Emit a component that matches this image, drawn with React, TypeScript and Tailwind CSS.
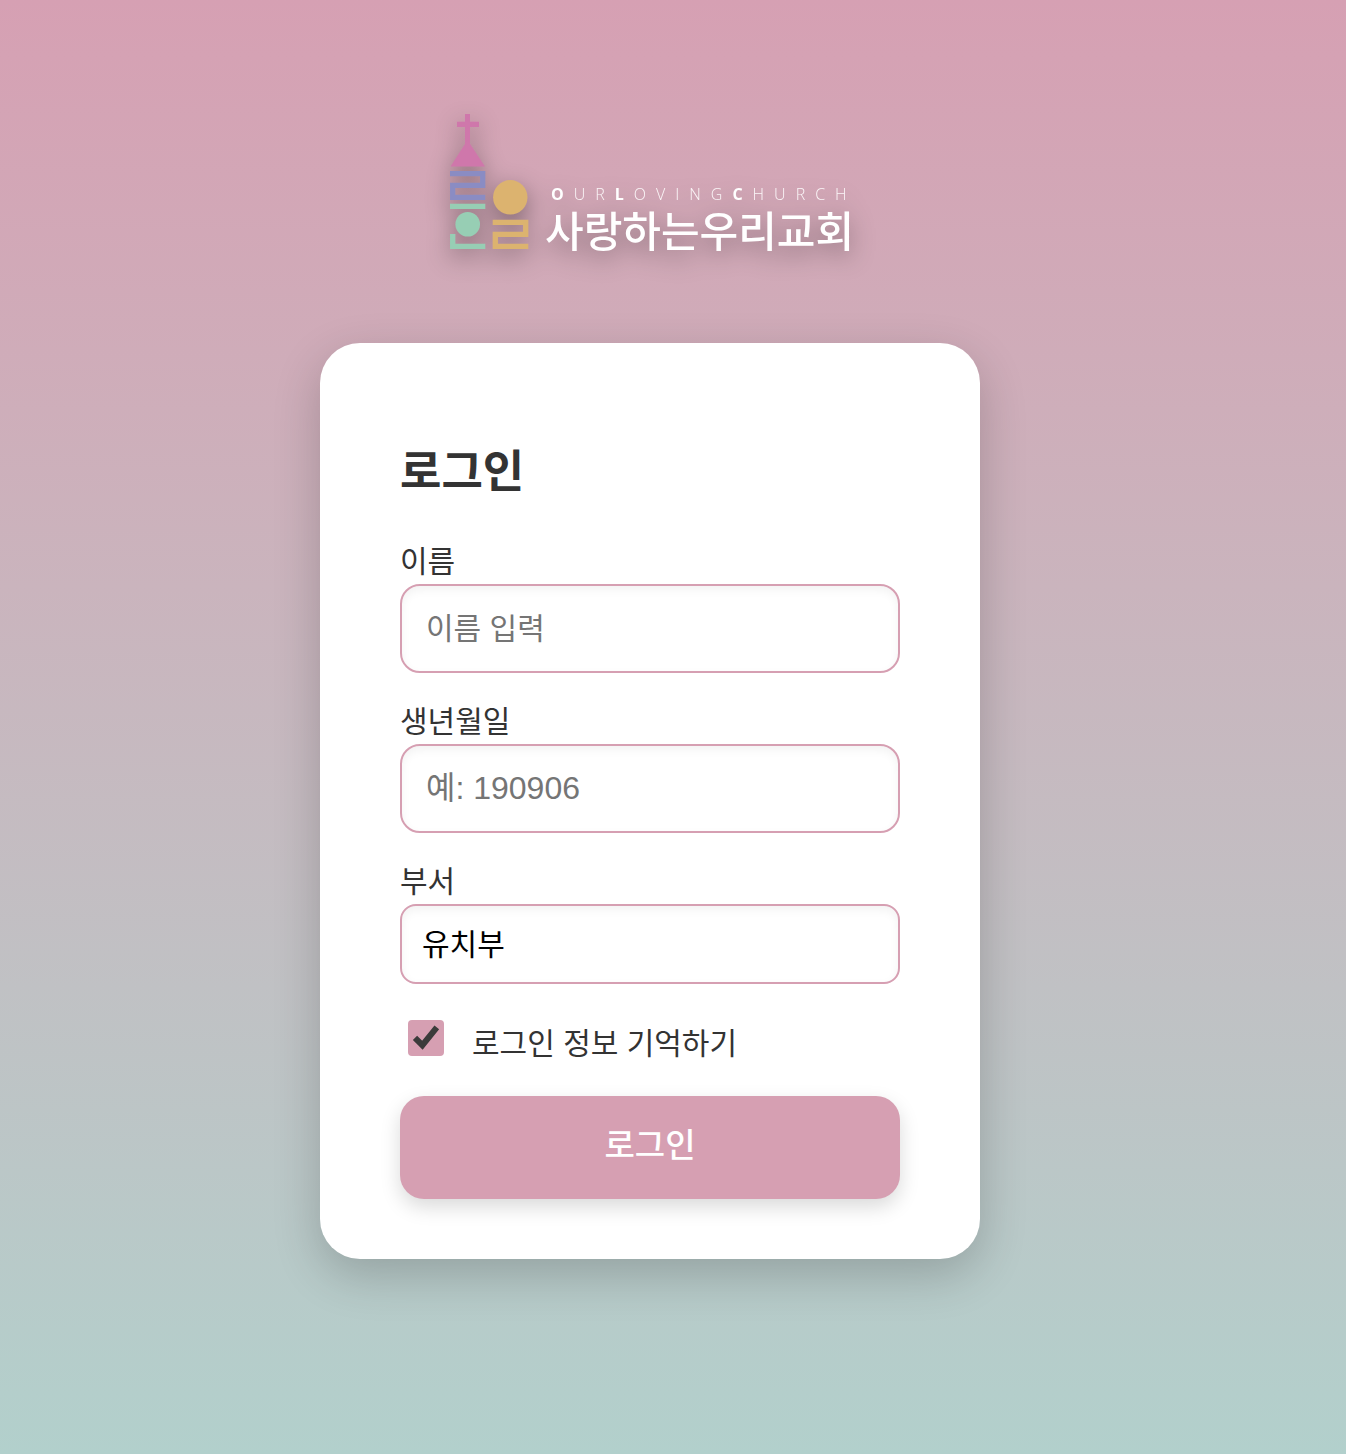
import { useState } from "react";
import type { ReactNode } from "react";

const fieldClass =
  "block w-full border-2 border-[#d69fb2] bg-white shadow-[inset_0_4px_10px_rgba(0,0,0,0.05)] outline-none focus:border-[#c47f97]";

function Emblem() {
  return (
    <svg viewBox="0 0 79 136" className="h-[136px] w-[79px] shrink-0" aria-hidden="true">
      <g fill="#cf77ab">
        <rect x="15" y="0" width="5" height="32" />
        <rect x="7" y="7.7" width="22" height="5.3" />
        <path d="M17.5 26 L35 52.5 H0.5 Z" />
      </g>
      <g fill="none" strokeWidth="5.3">
        <path stroke="#8a8cc3" d="M0 59.7 H32.7 V71.3 H2.7 V83.3 H35.3" />
        <path stroke="#dcb36f" d="M42.7 108.3 H75.7 V120.3 H45.3 V132.3 H78.3" />
        <path stroke="#97ceb4" d="M0 92.3 H35.3 M2.7 120 V132.3 H35.3" />
      </g>
      <circle cx="17.7" cy="110.3" r="12.3" fill="#97ceb4" />
      <circle cx="60.3" cy="83.3" r="17.2" fill="#dcb36f" />
    </svg>
  );
}

function Logo() {
  return (
    <div className="flex items-end gap-4 text-white drop-shadow-[0_8px_12px_rgba(0,0,0,0.4)]">
      <Emblem />
      <div className="w-[305px]">
        <p className="mb-3 pl-1.5 font-['Open_Sans',sans-serif] text-base leading-5 font-light tracking-[10px] whitespace-nowrap text-white/90">
          <b className="font-bold text-white">O</b>UR<b className="font-bold text-white">L</b>OVING
          <b className="font-bold text-white">C</b>HURCH
        </p>
        <p className="text-[42px] leading-[34px] font-medium whitespace-nowrap">사랑하는우리교회</p>
      </div>
    </div>
  );
}

function Field({ id, label, children }: { id: string; label: string; children: ReactNode }) {
  return (
    <div>
      <label htmlFor={id} className="mb-1 block leading-9">
        {label}
      </label>
      {children}
    </div>
  );
}

export default function App() {
  const [department, setDepartment] = useState("유치부");
  const [remember, setRemember] = useState(true);

  return (
    <main className="flex min-h-screen flex-col items-center bg-linear-to-b from-[#d6a0b3] to-[#b2d0cc] px-4 pt-[114px] pr-[62px] pb-16 font-['Liberation_Sans','Noto_Sans_CJK_KR',sans-serif] text-[30px] text-[#333]">
      <Logo />
      <form
        onSubmit={(e) => e.preventDefault()}
        className="mt-[93px] w-full max-w-[660px] rounded-[40px] bg-white px-20 pt-[98px] pb-[60px] shadow-[0_16px_48px_rgba(0,0,0,0.2)]"
      >
        <h1 className="text-[45px] leading-16 font-bold">로그인</h1>
        <div className="mt-[39px] flex flex-col gap-[31px]">
          <Field id="name" label="이름">
            <input
              id="name"
              type="text"
              placeholder="이름 입력"
              className={`${fieldClass} h-[89px] rounded-[20px] px-6 placeholder:text-[#757575]`}
            />
          </Field>
          <Field id="birth" label="생년월일">
            <input
              id="birth"
              type="text"
              inputMode="numeric"
              placeholder="예: 190906"
              className={`${fieldClass} h-[89px] rounded-[20px] px-6 text-[32px] placeholder:text-[#757575]`}
            />
          </Field>
          <Field id="department" label="부서">
            <select
              id="department"
              value={department}
              onChange={(e) => setDepartment(e.target.value)}
              className={`${fieldClass} h-20 appearance-none rounded-2xl px-5 text-black`}
            >
              <option>유치부</option>
              <option>유년부</option>
              <option>초등부</option>
            </select>
          </Field>
        </div>
        <div className="mt-9 flex items-start gap-7 pl-2">
          <span className="relative size-9 shrink-0">
            <input
              id="remember"
              type="checkbox"
              checked={remember}
              onChange={(e) => setRemember(e.target.checked)}
              className="block size-9 appearance-none rounded bg-[#d69fb2]"
            />
            {remember && (
              <svg
                viewBox="0 0 36 36"
                className="pointer-events-none absolute inset-0 size-9"
                fill="none"
                stroke="#3b3b3b"
                strokeWidth="6"
                aria-hidden="true"
              >
                <path d="M7 17.8 L14.4 25.2 L28.8 7.4" />
              </svg>
            )}
          </span>
          <label htmlFor="remember" className="leading-12">
            로그인 정보 기억하기
          </label>
        </div>
        <button
          type="submit"
          className="mt-7 block h-[103px] w-full rounded-3xl bg-[#d69fb2] pb-1 text-[33px] font-medium text-white shadow-[0_8px_20px_rgba(0,0,0,0.15)]"
        >
          로그인
        </button>
      </form>
    </main>
  );
}
